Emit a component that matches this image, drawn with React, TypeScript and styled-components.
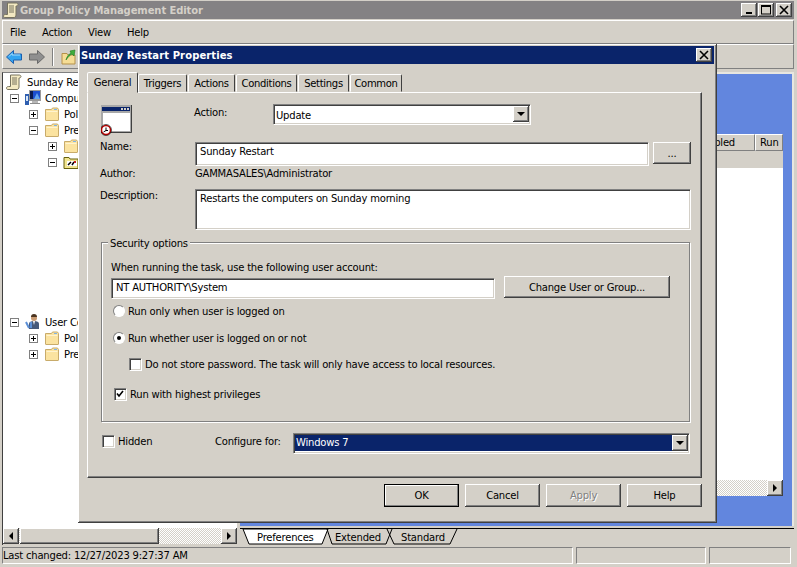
import React from "react";
import styled, { createGlobalStyle, css } from "styled-components";

const GlobalStyle = createGlobalStyle`
  html, body {
    margin: 0;
    padding: 0;
    background: #d4d0c8;
  }
  * {
    box-sizing: border-box;
  }
`;

const raised = css`
  background: #d4d0c8;
  box-shadow: inset -1px -1px 0 #404040, inset 1px 1px 0 #fff, inset -2px -2px 0 #808080;
`;

const sunken = css`
  box-shadow: inset 1px 1px 0 #808080, inset 2px 2px 0 #404040, inset -1px -1px 0 #d4d0c8, 1px 1px 0 #fff;
`;

const hatch = css`
  background: repeating-conic-gradient(#fff 0 25%, #d4d0c8 0 50%) 0 0 / 2px 2px;
`;

const Screen = styled.div`
  position: relative;
  width: 797px;
  height: 567px;
  overflow: hidden;
  padding: 1px 3px 0 2px;
  background: #d4d0c8;
  color: #000;
  font-family: "DejaVu Sans", sans-serif;
  font-size: 10px;
  letter-spacing: -0.2px;
  display: flex;
  flex-direction: column;
`;

const CaptionBar = styled.div`
  height: 18px;
  background: #848284;
  color: #d4d0c8;
  font-weight: 700;
  display: flex;
  align-items: center;
  gap: 1px;
  padding: 0 2px 0 1px;
  font-size: 10px;
  flex: none;
`;

const CaptionText = styled.span`
  flex: 1;
  letter-spacing: -0.1px;
`;

const CaptionButton = styled.div<{ $gap?: number }>`
  ${raised}
  width: 16px;
  height: 14px;
  margin-left: ${(p) => p.$gap ?? 0}px;
  display: flex;
  align-items: center;
  justify-content: center;
`;

const Band = styled.div<{ $height: number }>`
  flex: none;
  height: ${(p) => p.$height}px;
  border: 1px solid;
  border-color: #fff #808080 #808080 #fff;
  display: flex;
  align-items: center;
  background: #d4d0c8;
`;

const MenuBar = styled(Band)`
  margin-top: 1px;
  padding: 1px 0 0 7px;
  gap: 16px;
`;

const ToolBar = styled(Band)`
  padding-left: 3px;
`;

const ToolIcon = styled.div<{ $gap?: number }>`
  margin-left: ${(p) => p.$gap ?? 0}px;
  display: flex;
`;

const ToolSeparator = styled.div`
  width: 2px;
  height: 18px;
  margin: 0 7px 0 7px;
  border-left: 1px solid #808080;
  border-right: 1px solid #fff;
`;

const Main = styled.div`
  flex: none;
  height: 473px;
  margin-top: 3px;
  display: flex;
  gap: 3px;
`;

const LeftColumn = styled.div`
  width: 235px;
  flex: none;
  display: flex;
  flex-direction: column;
  border-left: 1px solid #404040;
  border-top: 1px solid #808080;
`;

const Tree = styled.div`
  flex: 1;
  background: #fff;
  padding-top: 1px;
  overflow: hidden;
`;

const TreeRow = styled.div<{ $level: number; $top?: number; $plain?: boolean }>`
  height: 16px;
  margin-top: ${(p) => p.$top ?? 0}px;
  padding-left: ${(p) => (p.$plain ? 3 : 7 + p.$level * 19)}px;
  display: flex;
  align-items: center;
  white-space: nowrap;
  svg {
    flex: none;
  }
`;

const Expander = styled.span`
  width: 9px;
  height: 9px;
  flex: none;
  margin-right: 6px;
  border: 1px solid #808080;
  background: #fff;
  position: relative;
  &::before {
    content: "";
    position: absolute;
    left: 1px;
    top: 3px;
    width: 5px;
    height: 1px;
    background: #000;
  }
`;

const ExpanderPlus = styled(Expander)`
  &::after {
    content: "";
    position: absolute;
    left: 3px;
    top: 1px;
    width: 1px;
    height: 5px;
    background: #000;
  }
`;

const TreeLabel = styled.span<{ $gap?: number }>`
  margin-left: ${(p) => p.$gap ?? 4}px;
`;

const ScrollBar = styled.div`
  flex: none;
  height: 16px;
  display: flex;
  ${hatch}
`;

const ScrollButton = styled.div`
  ${raised}
  width: 16px;
  height: 16px;
  flex: none;
  display: flex;
  align-items: center;
  justify-content: center;
`;

const ScrollThumb = styled.div<{ $width: number }>`
  ${raised}
  width: ${(p) => p.$width}px;
  margin-left: 1px;
`;

const ScrollFill = styled.div`
  flex: 1;
`;

const LeftScroll = styled(ScrollBar)`
  margin-bottom: 1px;
`;

const RightColumn = styled.div`
  flex: 1;
  display: flex;
  flex-direction: column;
  min-width: 0;
`;

const Blue = styled.div`
  flex: none;
  height: 454px;
  background: #6286de;
  border-top: 2px solid #e8e6e0;
  border-right: 2px solid #e8e6e0;
  padding: 60px 9px 30px 4px;
  display: flex;
`;

const Child = styled.div`
  flex: 1;
  display: flex;
  flex-direction: column;
  background: #d4d0c8;
`;

const ColumnHeader = styled.div`
  flex: none;
  height: 17px;
  display: flex;
  justify-content: flex-end;
`;

const HeaderCell = styled.div<{ $width: number }>`
  width: ${(p) => p.$width}px;
  border: 1px solid;
  border-color: #fff #808080 #808080 #fff;
  padding-left: 4px;
  line-height: 15px;
`;

const HeaderStrip = styled.div`
  flex: none;
  height: 17px;
`;

const ListBody = styled.div`
  flex: 1;
  background: #fff;
`;

const TabStrip = styled.div`
  position: relative;
  flex: none;
  height: 17px;
  margin-top: 2px;
  border-top: 1px solid #000;
  display: flex;
  align-items: center;
  padding-left: 17px;
`;

const TabShapes = styled.svg`
  position: absolute;
  left: 0;
  top: 0;
`;

const SheetTab = styled.span<{ $width: number }>`
  position: relative;
  width: ${(p) => p.$width}px;
  flex: none;
`;

const StatusBar = styled.div`
  flex: none;
  height: 17px;
  margin-top: 2px;
  display: flex;
  gap: 3px;
`;

const StatusPanel = styled.div<{ $width: number }>`
  width: ${(p) => p.$width}px;
  border: 1px solid;
  border-color: #808080 #fff #fff #808080;
  line-height: 16px;
`;

const Dialog = styled.div`
  position: absolute;
  left: 78px;
  top: 44px;
  width: 639px;
  height: 479px;
  background: #d4d0c8;
  box-shadow: inset -1px -1px 0 #404040, inset 1px 1px 0 #fff, inset -2px -2px 0 #808080;
  padding: 2px 3px 2px 2px;
  display: flex;
  flex-direction: column;
`;

const DialogTitle = styled.div`
  flex: none;
  height: 18px;
  background: #0a246a;
  color: #fff;
  font-weight: 700;
  font-size: 10px;
  letter-spacing: 0.1px;
  display: flex;
  align-items: center;
  justify-content: space-between;
  padding: 0 2px 0 1px;
`;

const DialogBody = styled.div`
  flex: 1;
  padding: 8px 12px 0 7px;
  display: flex;
  flex-direction: column;
`;

const TabRow = styled.div`
  flex: none;
  height: 20px;
  display: flex;
  align-items: flex-end;
  position: relative;
  z-index: 1;
`;

const Tab = styled.div<{ $width: number; $active?: boolean }>`
  width: ${(p) => p.$width}px;
  height: ${(p) => (p.$active ? 21 : 18)}px;
  margin-bottom: ${(p) => (p.$active ? -1 : 0)}px;
  margin-right: ${(p) => (p.$active ? 0 : 1)}px;
  padding-top: ${(p) => (p.$active ? 0 : 1)}px;
  background: #d4d0c8;
  border: 1px solid;
  border-color: #fff #404040 transparent #fff;
  border-radius: 2px 2px 0 0;
  letter-spacing: -0.3px;
  display: flex;
  align-items: center;
  justify-content: center;
`;

const TabPanel = styled.div`
  flex: none;
  height: 386px;
  border: 1px solid;
  border-color: #fff #404040 #404040 #fff;
  box-shadow: inset -1px -1px 0 #808080;
  padding: 11px 11px 0 12px;
`;

const TopRow = styled.div`
  height: 38px;
  display: flex;
`;

const IconSlot = styled.div`
  width: 94px;
  padding: 1px 0 0 1px;
`;

const ActionLabel = styled.div`
  width: 79px;
  padding-top: 3px;
`;

const Row = styled.div<{ $top?: number }>`
  display: flex;
  margin-top: ${(p) => p.$top ?? 0}px;
`;

const FieldLabel = styled.div<{ $shift?: number }>`
  width: 95px;
  flex: none;
  line-height: 13px;
  margin-top: ${(p) => p.$shift ?? 0}px;
`;

const AuthorValue = styled.span`
  margin-top: 1px;
`;

const Field = styled.div<{ $width: number; $height: number }>`
  ${sunken}
  width: ${(p) => p.$width}px;
  height: ${(p) => p.$height}px;
  flex: none;
  background: #fff;
  padding: 3px 5px;
  line-height: 14px;
`;

const PushButton = styled.div<{ $width: number; $height: number; $gap?: number; $disabled?: boolean; $default?: boolean }>`
  ${raised}
  width: ${(p) => p.$width}px;
  height: ${(p) => p.$height}px;
  margin-left: ${(p) => p.$gap ?? 0}px;
  flex: none;
  display: flex;
  align-items: center;
  justify-content: center;
  color: ${(p) => (p.$disabled ? "#808080" : "#000")};
  text-shadow: ${(p) => (p.$disabled ? "1px 1px 0 #fff" : "none")};
  ${(p) =>
    p.$default &&
    css`
      outline: 1px solid #000;
      outline-offset: -1px;
      box-shadow: inset -2px -2px 0 #808080, inset 2px 2px 0 #fff;
    `}
`;

const Select = styled.div<{ $width: number }>`
  ${sunken}
  width: ${(p) => p.$width}px;
  height: 20px;
  flex: none;
  background: #fff;
  padding: 2px 1px 2px 2px;
  display: flex;
`;

const SelectText = styled.div<{ $selected?: boolean }>`
  flex: 1;
  padding-left: 1px;
  line-height: ${(p) => (p.$selected ? 16 : 20)}px;
  background: ${(p) => (p.$selected ? "#0a246a" : "#fff")};
  color: ${(p) => (p.$selected ? "#fff" : "#000")};
`;

const SelectArrow = styled.div`
  ${raised}
  width: 16px;
  flex: none;
  display: flex;
  align-items: center;
  justify-content: center;
`;

const Group = styled.div`
  position: relative;
  width: 589px;
  height: 180px;
  margin: 13px 0 0 1px;
  border: 1px solid #808080;
  box-shadow: inset 1px 1px 0 #fff, 1px 1px 0 #fff;
  padding: 19px 9px 0 9px;
`;

const Legend = styled.div`
  position: absolute;
  left: 6px;
  top: -6px;
  padding: 0 2px;
  background: #d4d0c8;
  line-height: 13px;
`;

const AccountRow = styled.div`
  display: flex;
  align-items: flex-end;
  margin-top: 3px;
  gap: 10px;
`;

const Option = styled.div<{ $top: number; $left?: number }>`
  display: flex;
  align-items: center;
  height: 14px;
  margin-top: ${(p) => p.$top}px;
  margin-left: ${(p) => p.$left ?? 0}px;
`;

const Radio = styled.span<{ $on?: boolean }>`
  width: 12px;
  height: 12px;
  flex: none;
  margin: 0 3px 0 2px;
  border-radius: 50%;
  border: 1px solid;
  border-color: #808080 #fff #fff #808080;
  background: #fff;
  display: flex;
  align-items: center;
  justify-content: center;
  &::after {
    content: "";
    width: 4px;
    height: 4px;
    border-radius: 50%;
    background: ${(p) => (p.$on ? "#000" : "transparent")};
  }
`;

const Checkbox = styled.span<{ $gap?: number }>`
  ${sunken}
  width: 12px;
  height: 12px;
  flex: none;
  margin-right: ${(p) => p.$gap ?? 4}px;
  background: #fff;
  display: flex;
  align-items: center;
  justify-content: center;
`;

const BottomRow = styled.div`
  display: flex;
  align-items: center;
  margin-top: 11px;
  height: 20px;
`;

const HiddenOption = styled.div`
  width: 115px;
  display: flex;
  align-items: center;
  padding: 0 0 4px 2px;
`;

const ConfigureLabel = styled.div`
  width: 78px;
  padding-bottom: 3px;
`;

const ButtonRow = styled.div`
  flex: none;
  margin-top: 6px;
  display: flex;
  justify-content: flex-end;
  gap: 6px;
`;

const Arrow = ({ dir }: { dir: "left" | "right" | "down" }) => {
  const points = dir === "left" ? "5,0 1,4 5,8" : dir === "right" ? "1,0 5,4 1,8" : "0,2 8,2 4,6";
  return (
    <svg width={dir === "down" ? 8 : 6} height="8" viewBox={dir === "down" ? "0 0 8 8" : "0 0 6 8"}>
      <polygon points={points} fill="#000" />
    </svg>
  );
};

const Folder = () => (
  <svg width="16" height="16" viewBox="0 0 16 16">
    <path d="M1.500 3.500h6l1-1.500h5l1 1.500v10.500a.5.5 0 0 1-.5.5h-12a.5.5 0 0 1-.5-.5z" fill="#fbe3a0" stroke="#c8ab6a" />
    <path d="M10 3h3v1h-3z" fill="#7fb4e8" />
    <path d="M2.500 5h11v1h-11z" fill="#fff3cf" />
  </svg>
);

const TaskFolder = () => (
  <svg width="16" height="16" viewBox="0 0 16 16">
    <path d="M1 3.500h5l1 1.500h8v9.500H1z" fill="#f2e58f" stroke="#66600c" />
    <rect x="4" y="7" width="10" height="5" fill="#fff" />
    <path d="M5 11l3-3M9 11l2-3" stroke="#000" strokeWidth="1.500" />
    <rect x="11" y="7" width="2" height="2" fill="#c02020" />
  </svg>
);

const ScrollIcon = () => (
  <svg width="16" height="16" viewBox="0 0 16 16">
    <path
      d="M4.500 1h8.500c1 0 2 .5 2 1.500S14 4 13 4v9c0 1.500-1 2.500-2 2.500H2c-1 0-1.500-.5-1.500-1.500S1.500 12.500 2.500 12.500H4.500z"
      fill="#f3e9c2"
      stroke="#77735f"
    />
    <path d="M6 4h5M6 6h5M6 8h5M6 10h5" stroke="#77735f" />
  </svg>
);

const ComputerIcon = () => (
  <svg width="16" height="16" viewBox="0 0 16 16">
    <rect x="4" y="0" width="12" height="11" fill="#9a9a9a" />
    <rect x="5" y="1" width="10" height="8" fill="#1c4fd0" />
    <path d="M5 1h3v8H5z" fill="#0c1c50" />
    <path d="M9 9l3-6 3 6z" fill="#63a6ef" />
    <rect x="7" y="11" width="6" height="2" fill="#b8b8b8" />
    <rect x="5" y="13" width="10" height="1" fill="#8d8d8d" />
    <rect x="0" y="4" width="4" height="11" fill="#2f5fb0" />
    <rect x="1" y="6" width="2" height="5" fill="#d7e6f7" />
  </svg>
);

const UserIcon = () => (
  <svg width="16" height="16" viewBox="0 0 16 16">
    <circle cx="9" cy="4" r="3" fill="#c99b72" />
    <path d="M6 3c0-2 1-3 3-3s3 1 3 3H7z" fill="#4a3420" />
    <path d="M4 15V9.500C4 8 6 7 9 7s5 1 5 2.500V15z" fill="#45597a" />
    <path d="M1 8l3 6M6 8v6" stroke="#5b8fd6" strokeWidth="2" />
    <path d="M8 7l1 4 1-4z" fill="#fff" />
  </svg>
);

const BackIcon = () => (
  <svg width="16" height="16" viewBox="0 0 16 16">
    <path d="M.5 8l7-6.500V5h8v6h-8v3.500z" fill="#33a4f0" stroke="#1c5fae" />
    <path d="M3 7.500l3-3V6h8" fill="none" stroke="#a6dcfb" />
  </svg>
);

const ForwardIcon = () => (
  <svg width="16" height="16" viewBox="0 0 16 16">
    <path d="M15.500 8l-7-6.500V5h-8v6h8v3.500z" fill="#8f8f8f" stroke="#6a6a6a" />
  </svg>
);

const FolderUpIcon = () => (
  <svg width="16" height="17" viewBox="0 0 16 17">
    <path d="M1 5.500h5l1 1.500h7v9H1z" fill="#f6dd95" stroke="#b5914a" />
    <path d="M5 12c1-4 3-6 5-7l-1-2 5-1-1 6-2-2c-2 1-4 3-6 6z" fill="#3fae3b" stroke="#1d7a1e" strokeWidth=".6" />
  </svg>
);

const TaskWindowIcon = () => (
  <svg width="34" height="31" viewBox="0 0 34 31">
    <rect x="0" y="0" width="31" height="28" fill="#a8a8a8" />
    <path d="M30.500 0v27.500H0" fill="none" stroke="#404040" />
    <rect x="1" y="2" width="28" height="4" fill="#0a246a" />
    <rect x="20" y="3" width="2" height="2" fill="#d4d0c8" />
    <rect x="23" y="3" width="2" height="2" fill="#d4d0c8" />
    <rect x="26" y="3" width="2" height="2" fill="#d4d0c8" />
    <rect x="2" y="8" width="27" height="18" fill="#fff" />
    <circle cx="5" cy="25" r="4.500" fill="#fff" stroke="#c00000" strokeWidth="1.500" />
    <circle cx="5" cy="25" r="5.500" fill="none" stroke="#000" strokeWidth=".6" />
    <path d="M5 22.500V25.500L2.500 27M5 25.500h2" stroke="#000" fill="none" />
  </svg>
);

const CheckMark = () => (
  <svg width="8" height="8" viewBox="0 0 8 8">
    <path d="M1 3.500l2 2.500 4-5" fill="none" stroke="#000" strokeWidth="1.600" />
  </svg>
);

const App = () => {
  return (
    <Screen>
      <GlobalStyle />
      <CaptionBar>
        <ScrollIcon />
        <CaptionText>Group Policy Management Editor</CaptionText>
        <CaptionButton>
          <svg width="10" height="10" viewBox="0 0 10 10">
            <rect x="2" y="7" width="6" height="2" fill="#000" />
          </svg>
        </CaptionButton>
        <CaptionButton>
          <svg width="10" height="10" viewBox="0 0 10 10">
            <rect x=".5" y="1" width="9" height="8" fill="none" stroke="#000" />
            <rect x="0" y="0" width="10" height="2" fill="#000" />
          </svg>
        </CaptionButton>
        <CaptionButton $gap={1}>
          <svg width="10" height="10" viewBox="0 0 10 10">
            <path d="M1 1l8 8M9 1l-8 8" stroke="#000" strokeWidth="1.600" />
          </svg>
        </CaptionButton>
      </CaptionBar>

      <MenuBar $height={24}>
        <span>File</span>
        <span>Action</span>
        <span>View</span>
        <span>Help</span>
      </MenuBar>

      <ToolBar $height={25}>
        <BackIcon />
        <ToolIcon $gap={7}>
          <ForwardIcon />
        </ToolIcon>
        <ToolSeparator />
        <ToolIcon>
          <FolderUpIcon />
        </ToolIcon>
      </ToolBar>

      <Main>
        <LeftColumn>
          <Tree>
            <TreeRow $level={0} $plain>
              <ScrollIcon />
              <TreeLabel $gap={5}>Sunday Restart</TreeLabel>
            </TreeRow>
            <TreeRow $level={0}>
              <Expander />
              <ComputerIcon />
              <TreeLabel>Computer Configuration</TreeLabel>
            </TreeRow>
            <TreeRow $level={1}>
              <ExpanderPlus />
              <Folder />
              <TreeLabel>Policies</TreeLabel>
            </TreeRow>
            <TreeRow $level={1}>
              <Expander />
              <Folder />
              <TreeLabel>Preferences</TreeLabel>
            </TreeRow>
            <TreeRow $level={2}>
              <ExpanderPlus />
              <Folder />
            </TreeRow>
            <TreeRow $level={2}>
              <Expander />
              <TaskFolder />
            </TreeRow>
            <TreeRow $level={0} $top={144}>
              <Expander />
              <UserIcon />
              <TreeLabel>User Configuration</TreeLabel>
            </TreeRow>
            <TreeRow $level={1}>
              <ExpanderPlus />
              <Folder />
              <TreeLabel>Policies</TreeLabel>
            </TreeRow>
            <TreeRow $level={1}>
              <ExpanderPlus />
              <Folder />
              <TreeLabel>Preferences</TreeLabel>
            </TreeRow>
          </Tree>
          <LeftScroll>
            <ScrollButton>
              <Arrow dir="left" />
            </ScrollButton>
            <ScrollThumb $width={139} />
            <ScrollFill />
            <ScrollButton>
              <Arrow dir="right" />
            </ScrollButton>
          </LeftScroll>
        </LeftColumn>

        <RightColumn>
          <Blue>
            <Child>
              <ColumnHeader>
                <HeaderCell $width={64}>Enabled</HeaderCell>
                <HeaderCell $width={28}>Run</HeaderCell>
              </ColumnHeader>
              <HeaderStrip />
              <ListBody />
              <ScrollBar>
                <ScrollFill />
                <ScrollButton>
                  <Arrow dir="right" />
                </ScrollButton>
              </ScrollBar>
            </Child>
          </Blue>
          <TabStrip>
            <TabShapes width="240" height="16" viewBox="0 0 240 16">
              <path d="M3 0l6 15h73l6-15z" fill="#fff" stroke="#000" />
              <path d="M87 0l5 15h54l6-15" fill="none" stroke="#000" />
              <path d="M147 0l7 15h56l7-15" fill="none" stroke="#000" />
            </TabShapes>
            <SheetTab $width={78}>Preferences</SheetTab>
            <SheetTab $width={66}>Extended</SheetTab>
            <SheetTab $width={50}>Standard</SheetTab>
          </TabStrip>
        </RightColumn>
      </Main>

      <StatusBar>
        <StatusPanel $width={571}>Last changed: 12/27/2023 9:27:37 AM</StatusPanel>
        <StatusPanel $width={130} />
        <StatusPanel $width={82} />
      </StatusBar>

      <Dialog>
        <DialogTitle>
          <span>Sunday Restart Properties</span>
          <CaptionButton>
            <svg width="10" height="10" viewBox="0 0 10 10">
              <path d="M1 1l8 8M9 1l-8 8" stroke="#000" strokeWidth="1.600" />
            </svg>
          </CaptionButton>
        </DialogTitle>
        <DialogBody>
          <TabRow>
            <Tab $width={51} $active>
              General
            </Tab>
            <Tab $width={49}>Triggers</Tab>
            <Tab $width={47}>Actions</Tab>
            <Tab $width={61}>Conditions</Tab>
            <Tab $width={51}>Settings</Tab>
            <Tab $width={52}>Common</Tab>
          </TabRow>
          <TabPanel>
            <TopRow>
              <IconSlot>
                <TaskWindowIcon />
              </IconSlot>
              <ActionLabel>Action:</ActionLabel>
              <Select $width={257}>
                <SelectText>Update</SelectText>
                <SelectArrow>
                  <Arrow dir="down" />
                </SelectArrow>
              </Select>
            </TopRow>
            <Row>
              <FieldLabel $shift={-2}>Name:</FieldLabel>
              <Field $width={453} $height={23}>
                Sunday Restart
              </Field>
              <PushButton $width={38} $height={22} $gap={5}>
                ...
              </PushButton>
            </Row>
            <Row $top={2}>
              <FieldLabel>Author:</FieldLabel>
              <AuthorValue>GAMMASALES\Administrator</AuthorValue>
            </Row>
            <Row $top={9}>
              <FieldLabel>Description:</FieldLabel>
              <Field $width={495} $height={40}>
                Restarts the computers on Sunday morning
              </Field>
            </Row>
            <Group>
              <Legend>Security options</Legend>
              <div>When running the task, use the following user account:</div>
              <AccountRow>
                <Field $width={383} $height={20}>
                  NT AUTHORITY\System
                </Field>
                <PushButton $width={166} $height={22}>
                  Change User or Group...
                </PushButton>
              </AccountRow>
              <Option $top={6}>
                <Radio />
                Run only when user is logged on
              </Option>
              <Option $top={13}>
                <Radio $on />
                Run whether user is logged on or not
              </Option>
              <Option $top={12} $left={18}>
                <Checkbox />
                Do not store password. The task will only have access to local resources.
              </Option>
              <Option $top={16} $left={3}>
                <Checkbox>
                  <CheckMark />
                </Checkbox>
                Run with highest privileges
              </Option>
            </Group>
            <BottomRow>
              <HiddenOption>
                <Checkbox />
                Hidden
              </HiddenOption>
              <ConfigureLabel>Configure for:</ConfigureLabel>
              <Select $width={396}>
                <SelectText $selected>Windows 7</SelectText>
                <SelectArrow>
                  <Arrow dir="down" />
                </SelectArrow>
              </Select>
            </BottomRow>
          </TabPanel>
          <ButtonRow>
            <PushButton $width={75} $height={23} $default>
              OK
            </PushButton>
            <PushButton $width={75} $height={23}>
              Cancel
            </PushButton>
            <PushButton $width={75} $height={23} $disabled>
              Apply
            </PushButton>
            <PushButton $width={75} $height={23}>
              Help
            </PushButton>
          </ButtonRow>
        </DialogBody>
      </Dialog>
    </Screen>
  );
};

export default App;
